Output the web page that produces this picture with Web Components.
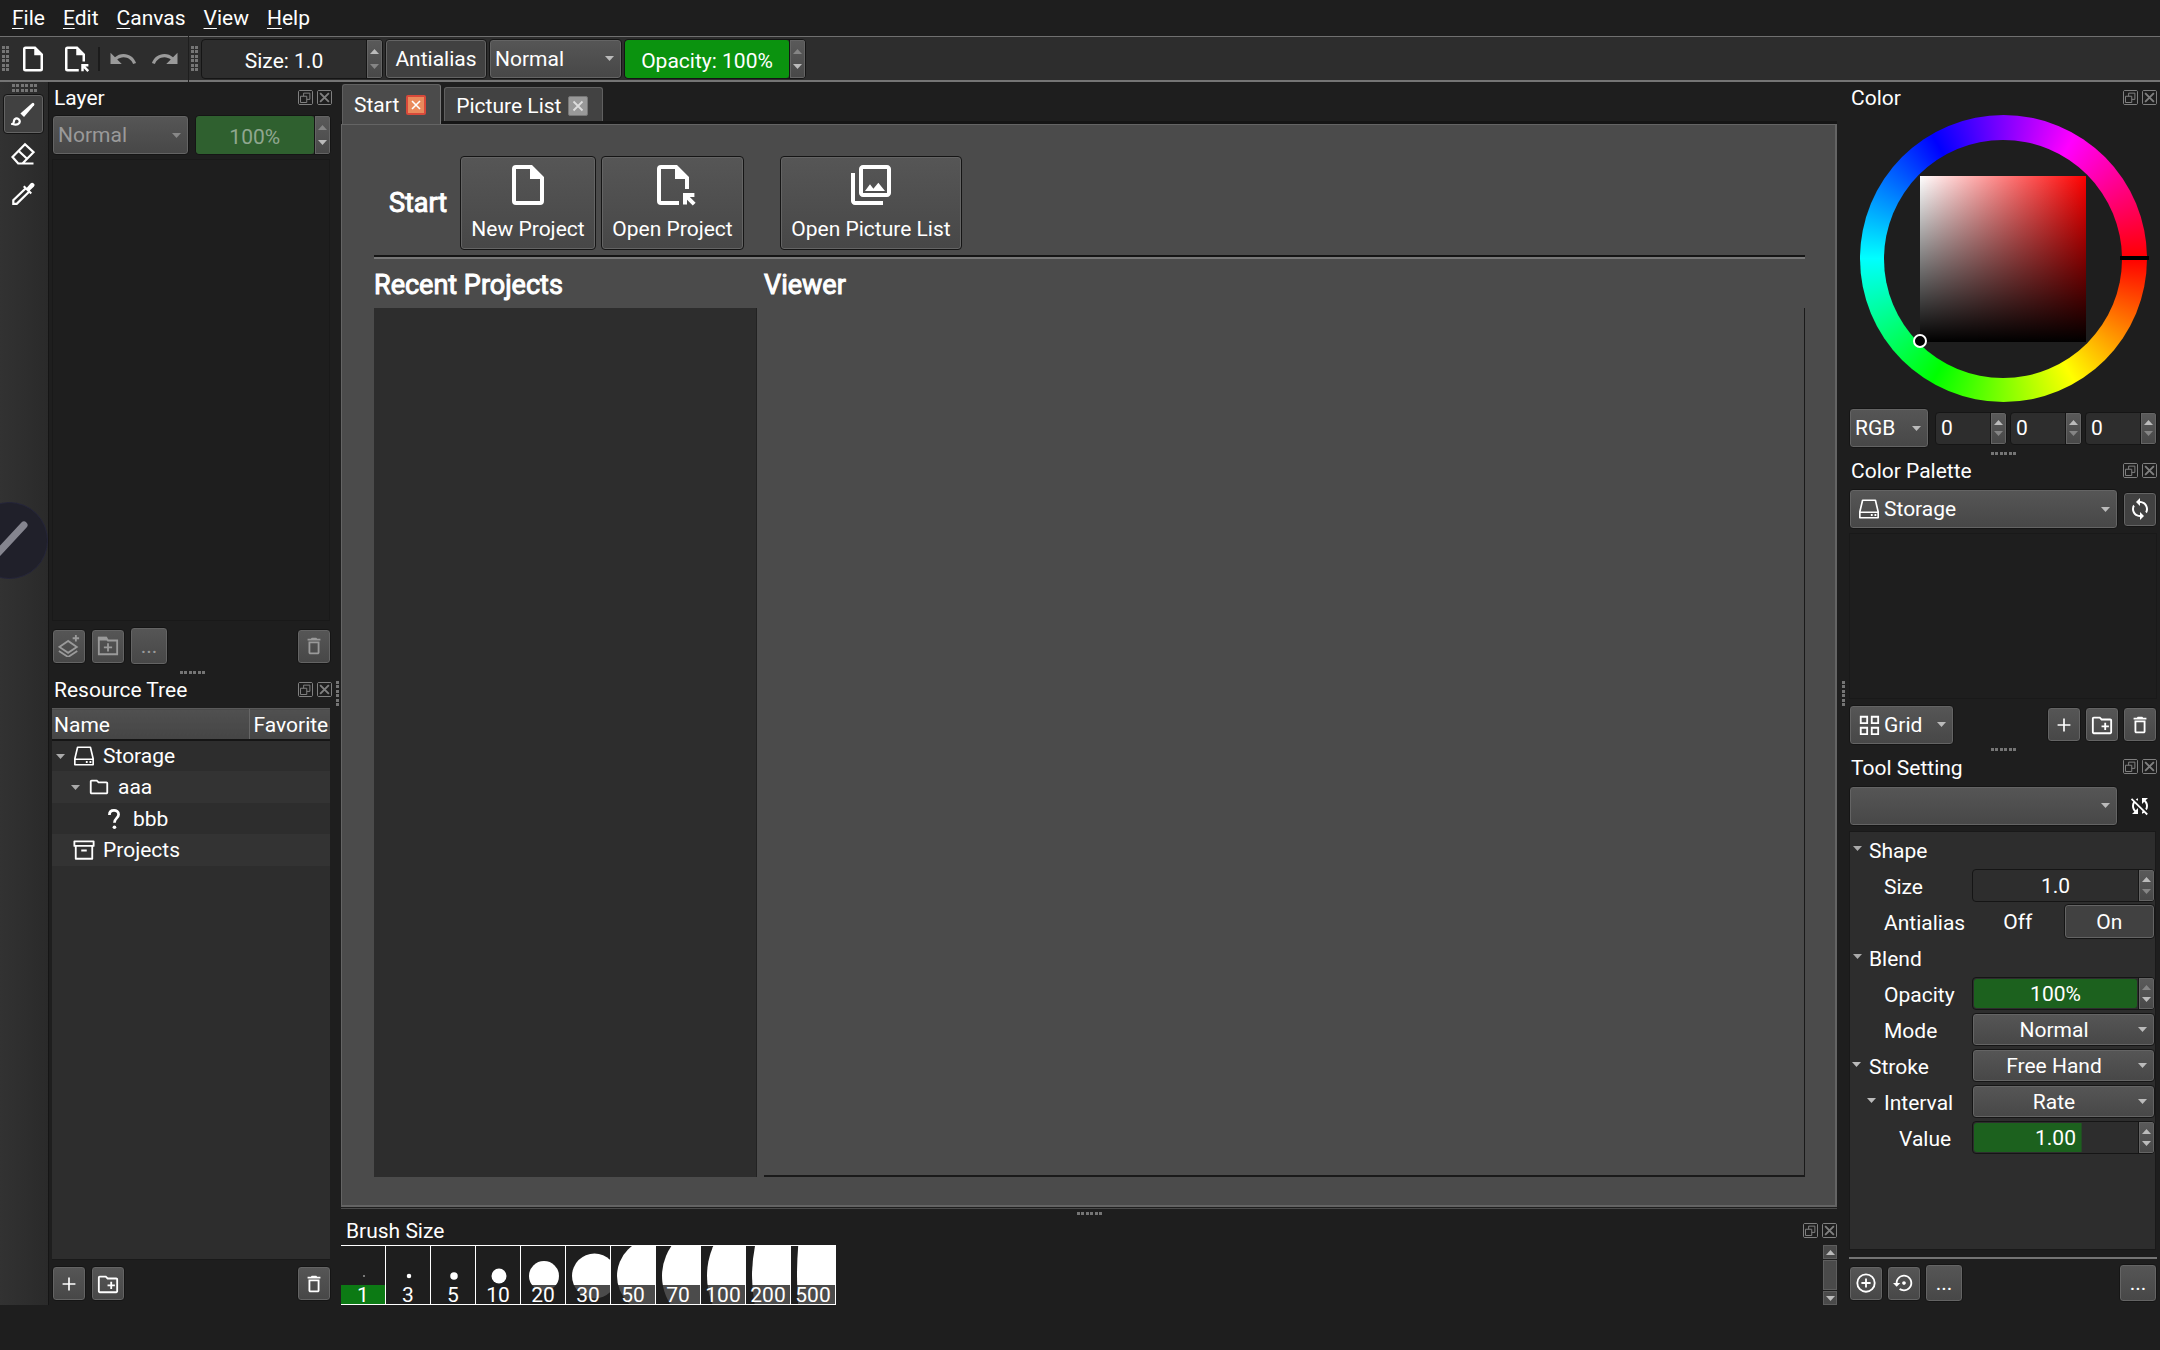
<!DOCTYPE html>
<html lang="en">
<head>
<meta charset="utf-8">
<title>Paint</title>
<style>
  :root {
    --bg: #1e1e1e;
    --panel: #2d2d2d;
    --pane: #4b4b4b;
    --edge: #151515;
    --rim: #646464;
    --green: #1c611e;
  }
  body {
    margin: 0;
    background: var(--bg);
    color: #fff;
    font: 21px/26px Roboto, "Liberation Sans", sans-serif;
  }
</style>
</head>
<body>
<paint-app></paint-app>

<script>
const ICONS = {
  file: `<path fill-rule="evenodd" d="M14 2H6a2 2 0 0 0-2 2v16a2 2 0 0 0 2 2h12a2 2 0 0 0 2-2V8zM6 4h7v5h5v11H6z"/>`,
  open: `<path d="M14 2H6a2 2 0 0 0-2 2v16a2 2 0 0 0 2 2h9v-2H6V4h7v5h5v5h2V8z"/><path d="M17 16h5.7v2h-2.3l2.9 2.9-1.4 1.4-2.9-2.9v2.3h-2z"/>`,
  pictures: `<path d="M20 4v12H8V4h12m0-2H8c-1.1 0-2 .9-2 2v12c0 1.1.9 2 2 2h12c1.1 0 2-.9 2-2V4c0-1.1-.9-2-2-2zm-8.5 9.67l1.69 2.26 2.48-3.1L19 15H9zM2 6v14c0 1.1.9 2 2 2h14v-2H4V6H2z"/>`,
  undo: `<path d="M12.5 8c-2.65 0-5.05.99-6.9 2.6L2 7v9h9l-3.62-3.62c1.39-1.16 3.16-1.88 5.12-1.88 3.54 0 6.55 2.31 7.6 5.5l2.37-.78C21.08 11.03 17.15 8 12.5 8z"/>`,
  redo: `<path d="M18.4 10.6C16.55 8.99 14.15 8 11.5 8c-4.65 0-8.58 3.03-9.96 7.22L3.9 16c1.05-3.19 4.05-5.5 7.6-5.5 1.95 0 3.73.72 5.12 1.88L13 16h9V7l-3.6 3.6z"/>`,
  brush: `<path d="M21 1.2a1.5 1.5 0 0 1 2.1 2.1L13 15l-3.6-3.6z"/><path d="M1.5 22c1.8-.6 1-3.3 2.2-4.7a3 3 0 0 1 4.6 3.7c-1.4 1.8-4.3 1.9-6.8 1z" fill="none" stroke="currentColor" stroke-width="2.2"/>`,
  eraser: `<path d="M1.500 15 14 2.200l8.500 8L11.500 21.500H7.200zM7.500 8.800l8.500 8M9 21.500h13.500" fill="none" stroke="currentColor" stroke-width="2.2"/>`,
  dropper: `<path d="M14.5 6.5 2.3 18.3v3.6h3.4L17.8 10" fill="none" stroke="currentColor" stroke-width="2.2"/><path d="M12 5l1.5-1.5 2.3 2.3L19.5 1.5a2 2 0 0 1 3.3 3.2l-4 3.8 2.2 2.2-1.5 1.5z"/>`,
  folder: `<path d="M9.17 6l2 2H20v10H4V6h5.17M10 4H4c-1.1 0-2 .9-2 2v12c0 1.1.9 2 2 2h16c1.1 0 2-.9 2-2V8c0-1.1-.9-2-2-2h-8l-2-2z"/>`,
  folderPlus: `<path d="M9.17 5l2 2H21v13H3V5h6.17M10 3H3c-1.1 0-2 .9-2 2v15c0 1.1.9 2 2 2h18c1.1 0 2-.9 2-2V7c0-1.1-.9-2-2-2h-9l-2-2z"/><path d="M14.5 17.5h2v-3h3v-2h-3v-3h-2v3h-3v2h3z"/>`,
  groupPlus: `<path d="M2 3h8l2 3h10v15H2z" fill="none" stroke="currentColor" stroke-width="2"/><path d="M1 2h10v4H1z"/><path d="M11 18h2v-3.5h3.5v-2H13V9h-2v3.5H7.5v2H11z"/>`,
  layerPlus: `<path d="M11 6.5 1.5 13 11 19.5 20.5 13zM1 17.5 11 24l10-6.5M19.5 0v7M16 3.5h7" fill="none" stroke="currentColor" stroke-width="2"/>`,
  trash: `<path d="M16 9v10H8V9h8m-1.5-6h-5l-1 1H5v2h14V4h-3.5l-1-1zM18 7H6v12c0 1.1.9 2 2 2h8c1.1 0 2-.9 2-2V7z"/>`,
  plus: `<path d="M12 5v14M5 12h14" stroke="currentColor" stroke-width="1.8"/>`,
  plusCircle: `<circle cx="12" cy="12" r="9.5" fill="none" stroke="currentColor" stroke-width="2"/><path d="M12 7v10M7 12h10" stroke="currentColor" stroke-width="2"/>`,
  reload: `<path d="M12 4V1L8 5l4 4V6c3.31 0 6 2.69 6 6 0 1.01-.25 1.97-.7 2.8l1.46 1.46C19.54 15.03 20 13.57 20 12c0-4.42-3.58-8-8-8zm0 14c-3.31 0-6-2.69-6-6 0-1.01.25-1.97.7-2.8L5.24 7.74C4.46 8.97 4 10.43 4 12c0 4.42 3.58 8 8 8v3l4-4-4-4v3z"/>`,
  noSync: `<path d="M10 6.35V4.26c-.8.21-1.55.54-2.23.96l1.46 1.46c.25-.12.5-.24.77-.33zm-7.14-.94l2.36 2.36C4.45 8.99 4 10.44 4 12c0 2.21.91 4.2 2.36 5.64L4 20h6v-6l-2.24 2.24C6.68 15.15 6 13.66 6 12c0-1 .25-1.94.68-2.77l8.08 8.08c-.25.13-.5.25-.77.34v2.09c.8-.21 1.55-.54 2.23-.96l2.36 2.36 1.27-1.27L4.14 4.14 2.86 5.41zM20 4h-6v6l2.24-2.24C17.32 8.85 18 10.34 18 12c0 1-.25 1.94-.68 2.77l1.46 1.46C19.55 15.01 20 13.56 20 12c0-2.21-.91-4.2-2.36-5.64L20 4z"/>`,
  restore: `<path d="M14 12c0-1.1-.9-2-2-2s-2 .9-2 2 .9 2 2 2 2-.9 2-2zm-2-9c-4.97 0-9 4.03-9 9H0l4 4 4-4H5c0-3.87 3.13-7 7-7s7 3.13 7 7-3.13 7-7 7c-1.51 0-2.91-.49-4.06-1.3l-1.42 1.44C8.04 20.3 9.94 21 12 21c4.97 0 9-4.03 9-9s-4.03-9-9-9z"/>`,
  drive: `<path d="M5 2.5h14L22 15v6.5H2V15zM2 15.5h20" fill="none" stroke="currentColor" stroke-width="1.8" stroke-linejoin="round"/><path d="M14 17.5h2v2h-2zM18 17.5h2v2h-2z"/>`,
  archive: `<path d="M1.5 2.5h21v5h-21zM3 7.5h18v14H3zM9 12.5h6" fill="none" stroke="currentColor" stroke-width="2" stroke-linejoin="round"/>`,
  question: `<path d="M7 7.5C7 3.5 9.5 2.5 12 2.5s5 1.5 5 4.5c0 4-4.5 4.2-4.5 9" fill="none" stroke="currentColor" stroke-width="3"/><circle cx="12.5" cy="21" r="2"/>`,
  grid: `<path d="M3 3h7v7H3zM15 3h7v7h-7zM3 15h7v7H3zM15 15h7v7h-7z" fill="none" stroke="currentColor" stroke-width="2"/>`,
  float: `<path d="M2 .8h20L23.2 2v20L22 23.2H2L.8 22V2zM4 10h10v10H4zM9 10V5h10v10h-5" fill="none" stroke="currentColor" stroke-width="1.6"/>`,
  close: `<path d="M2 .8h20L23.2 2v20L22 23.2H2L.8 22V2z" fill="none" stroke="currentColor" stroke-width="1.6"/><path d="M5 5l14 14M19 5 5 19" stroke="currentColor" stroke-width="3"/>`,
  cross: `<path d="M6 6l12 12M18 6 6 18" stroke="currentColor" stroke-width="2.4"/>`
};

const icon = (name, size = 22) =>
  `<svg class="icon" width="${size}" height="${size}" viewBox="0 0 24 24" fill="currentColor" aria-hidden="true">${ICONS[name]}</svg>`;

const arrow = (dir = "down") =>
  `<svg class="arrow" width="9" height="5" viewBox="0 0 9 5" fill="currentColor" aria-hidden="true"><path d="${dir === "up" ? "M0 5 4.5 0 9 5z" : "M0 0h9L4.5 5z"}"/></svg>`;

const COMMON = `
  :host, * { box-sizing: border-box; }
  button, input, select { font: inherit; color: inherit; margin: 0; padding: 0; border: 0; background: none; outline: none; border-radius: 0; }
  svg { display: block; flex: none; }
  .raised {
    background: linear-gradient(#565656, #474747);
    border: 1px solid var(--edge);
    border-radius: 4px;
    box-shadow: inset 0 0 0 1px var(--rim);
  }
`;

class BaseElement extends HTMLElement {
  connectedCallback() {
    if (this.shadowRoot) return;
    this.attachShadow({ mode: "open" });
    this.shadowRoot.innerHTML = `<style>${COMMON}</style>` + this.render();
  }

  attr(name, fallback = "") {
    return this.getAttribute(name) || fallback;
  }

  // visible caption for settings rows, hidden name otherwise
  caption() {
    if (!this.hasAttribute("caption")) return "";
    return `<label for="field" style="padding-left: ${this.attr("level", 0) * 15}px">
      <span class="twist">${this.hasAttribute("open") ? arrow() : ""}</span>${this.attr("caption")}</label>`;
  }
}

const ROW = `
  :host { display: grid; }
  :host([caption]) { grid-template-columns: 122px 1fr; align-items: center; height: 36px; }
  label { display: flex; align-items: center; padding-top: 2px; }
  .twist { width: 19px; padding: 0 0 4px 3px; color: #aaa; }
`;

class DotGrip extends BaseElement {
  render() {
    const steps = [0, 4, 9, 13, 18, 22];
    const lines = Number(this.attr("lines", 1));
    const vertical = this.hasAttribute("vertical");
    let dots = "";
    for (let l = 0; l < lines; l++) {
      dots += steps.map(s => vertical
        ? `<rect x="${l * 4}" y="${s}" width="3" height="3"/>`
        : `<rect x="${s}" y="${l * 5}" width="3" height="3"/>`).join("");
    }
    const w = vertical ? lines * 4 - 1 : 25;
    const h = vertical ? 25 : lines * 5 - 2;
    return `
      <style>:host { display: grid; place-items: center; color: #757575; }</style>
      <svg width="${w}" height="${h}" fill="currentColor">${dots}</svg>`;
  }
}

class MenuBar extends BaseElement {
  render() {
    const items = ["File", "Edit", "Canvas", "View", "Help"];
    return `
      <style>
        :host { display: block; }
        nav { display: flex; gap: 18px; padding: 5px 12px; height: 36px; }
        u { text-decoration-thickness: 1px; text-underline-offset: 3px; text-decoration-skip-ink: none; }
      </style>
      <nav>${items.map(t => `<button><u>${t[0]}</u>${t.slice(1)}</button>`).join("")}</nav>`;
  }
}

class ToolBar extends BaseElement {
  render() {
    return `
      <style>
        :host {
          display: flex;
          align-items: center;
          height: 46px;
          background: var(--panel);
          border-top: 1px solid #707070;
          border-bottom: 2px solid #757575;
        }
      </style>
      <slot></slot>`;
  }
}

class ToolButton extends BaseElement {
  render() {
    return `
      <style>
        :host { display: block; }
        button { display: flex; align-items: center; justify-content: center; width: 100%; height: 100%; white-space: nowrap; }
        :host([disabled]) button { color: #9a9a9a; }
        :host([pressed]) button { background: #414141; }
        :host([big]) button { flex-direction: column; gap: 7px; padding-bottom: 3px; }
      </style>
      <button class="${this.hasAttribute("flat") ? "" : "raised"}" aria-label="${this.attr("name", this.textContent)}">
        ${this.hasAttribute("icon") ? icon(this.attr("icon"), this.attr("size", 22)) : ""}<slot></slot>
      </button>`;
  }
}

class ComboBox extends BaseElement {
  render() {
    return `
      <style>
        ${ROW}
        .box { display: grid; align-items: center; height: 40px; color: #fff; }
        :host([caption]) .box { height: 33px; }
        .box > * { grid-area: 1 / 1; }
        select { appearance: none; width: 100%; height: 100%; padding: 0 24px 0 5px; }
        :host([icon]) select { padding-left: 34px; }
        :host([caption]) select { text-align: center; text-align-last: center; }
        :host([disabled]) select { color: #9a9a9a; opacity: 1; }
        .icon, .arrow { pointer-events: none; }
        .icon { margin-left: 9px; }
        .arrow { justify-self: end; margin-right: 8px; color: #bbb; }
        :host([disabled]) .arrow { color: #888; }
      </style>
      ${this.caption()}
      <div class="box">
        <select id="field" class="raised" aria-label="${this.attr("name", this.attr("caption"))}">
          <option>${this.attr("value")}</option>
        </select>
        ${this.hasAttribute("icon") ? icon(this.attr("icon")) : ""}
        ${arrow()}
      </div>`;
  }
}

class SpinBox extends BaseElement {
  render() {
    return `
      <style>
        ${ROW}
        .box {
          display: grid;
          grid-template-columns: 1fr 16px;
          height: 40px;
          background: var(--panel);
          border: 1px solid var(--edge);
          border-radius: 4px;
          overflow: hidden;
        }
        :host([caption]) .box, :host([plain]) .box { height: 33px; }
        input {
          width: 100%;
          min-width: 0;
          text-align: center;
          padding-top: 4px;
          border-radius: 3px;
          background: linear-gradient(var(--bar, transparent) 0 0) no-repeat 0 0 / var(--fill, 100%) 100%;
        }
        :host([caption]) input, :host([plain]) input { padding-top: 0; }
        :host([caption]) input { margin: 1px; width: auto; }
        :host([plain]) input { text-align: left; padding-left: 5px; }
        :host([disabled]) input { color: #8fa78f; }
        .steps {
          display: grid;
          background: linear-gradient(#5a5a5a, #484848);
          border-left: 1px solid var(--edge);
          box-shadow: inset 0 0 0 1px var(--rim);
          color: #bbb;
          padding: 4px 0;
        }
        .steps button { display: grid; place-items: center; }
        :host([min]) .steps button:last-child, :host([max]) .steps button:first-child { color: #858585; }
      </style>
      ${this.caption()}
      <div class="box">
        <input id="field" type="text" value="${this.attr("value")}" aria-label="${this.attr("name", this.attr("caption"))}">
        <div class="steps">
          <button aria-label="Increase">${arrow("up")}</button>
          <button aria-label="Decrease">${arrow()}</button>
        </div>
      </div>`;
  }
}

class DockPanel extends BaseElement {
  render() {
    return `
      <style>
        :host { display: flex; flex-direction: column; min-height: 0; }
        header { display: flex; align-items: center; gap: 4px; height: 28px; flex: none; padding-left: var(--inset, 2px); }
        h2 { flex: 1; margin: 0; font: inherit; }
        header button { color: #808080; margin-bottom: 2px; }
        .body { flex: 1; display: flex; flex-direction: column; min-height: 0; padding-top: var(--lead, 3px); }
      </style>
      <header>
        <h2>${this.attr("caption")}</h2>
        <button aria-label="Float">${icon("float", 15)}</button>
        <button aria-label="Close">${icon("close", 15)}</button>
      </header>
      <div class="body"><slot></slot></div>`;
  }
}

class ResourceTree extends BaseElement {
  render() {
    const rows = [
      { level: 0, open: true, icon: "drive", text: "Storage" },
      { level: 1, open: true, icon: "folder", text: "aaa" },
      { level: 2, icon: "question", text: "bbb" },
      { level: 0, icon: "archive", text: "Projects" }
    ];
    return `
      <style>
        :host { display: block; background: var(--panel); border-bottom: 1px solid #191919; }
        table { width: 100%; border-collapse: collapse; table-layout: fixed; }
        th { font-weight: 400; text-align: left; height: 31px; padding: 3px 2px 1px; background: linear-gradient(#505050, #454545); border-top: 1px solid #5a5a5a; border-bottom: 2px solid var(--edge); }
        th + th { border-left: 1px solid #666; padding-left: 4px; width: 81px; }
        td { height: 31px; padding: 0; }
        tr:nth-child(even) td { height: 32px; background: #333; }
        .node { display: flex; align-items: center; }
        .twist { width: 21px; padding-left: 4px; color: #aaa; }
        .icon { margin-right: 8px; }
      </style>
      <table>
        <thead><tr><th>Name</th><th>Favorite</th></tr></thead>
        <tbody>
          ${rows.map(r => `<tr><td><div class="node" style="padding-left: ${r.level * 15}px">
            <span class="twist">${r.open ? arrow() : ""}</span>${icon(r.icon)}${r.text}</div></td><td></td></tr>`).join("")}
        </tbody>
      </table>`;
  }
}

class ColorWheel extends BaseElement {
  render() {
    return `
      <style>
        :host { display: block; position: relative; width: 287px; height: 287px; margin: 0 auto; }
        .ring {
          height: 100%;
          border-radius: 50%;
          background: conic-gradient(from 90deg, #f00, #ff0, #0f0, #0ff, #00f, #f0f, #f00);
          display: grid;
          place-items: center;
        }
        .hole { width: 238px; height: 238px; border-radius: 50%; background: var(--bg); display: grid; place-items: center; }
        .shade { width: 166px; height: 166px; background: linear-gradient(transparent, #000), linear-gradient(90deg, #fff, #f00); }
        .hue { position: absolute; right: -2px; top: 141px; width: 29px; height: 4px; background: #000; }
        .pick { position: absolute; left: 53px; top: 219px; width: 14px; height: 14px; border: 2px solid #fff; border-radius: 50%; background: #000; }
      </style>
      <div class="ring"><div class="hole"><div class="shade"></div></div></div>
      <span class="hue"></span>
      <span class="pick"></span>`;
  }
}

class BrushSizes extends BaseElement {
  render() {
    const sizes = [1, 3, 5, 10, 20, 30, 50, 70, 100, 200, 500];
    // preview is 1.5x the size, pinned to the left edge once it gets too wide
    const preview = n => {
      const r = n * 0.75;
      const cx = n < 30 ? 23 : 6 + r;
      return `<circle cx="${cx}" cy="30" r="${r}"/>`;
    };
    return `
      <style>
        :host { display: flex; justify-content: space-between; height: 60px; }
        .sizes { display: flex; border: solid #fff; border-width: 1px 0; }
        .sizes button { display: grid; width: 45px; height: 58px; border-right: 1px solid #fff; }
        .sizes button > * { grid-area: 1 / 1; }
        .sizes span { align-self: end; height: 19px; line-height: 21px; background: rgba(30, 30, 30, .8); }
        .sizes .on span { background: #0c7a14; }
        .bar { display: grid; grid-template-rows: 14px 1fr 14px; gap: 1px; width: 14px; color: #bbb; }
        .bar > * { background: #4a4a4a; border: 1px solid #5e5e5e; display: grid; place-items: center; }
      </style>
      <div class="sizes">
        ${sizes.map(n => `<button class="${n === 1 ? "on" : ""}">
          <svg width="44" height="58" fill="#fff" aria-hidden="true">${preview(n)}</svg><span>${n}</span></button>`).join("")}
      </div>
      <div class="bar">
        <button aria-label="Scroll up">${arrow("up")}</button>
        <span></span>
        <button aria-label="Scroll down">${arrow()}</button>
      </div>`;
  }
}

class TabBar extends BaseElement {
  render() {
    return `
      <style>
        :host { display: flex; gap: 3px; height: 42px; padding: 2px 1px 0; background: linear-gradient(var(--bg) 39px, var(--edge) 39px); }
        .tab { display: flex; align-items: center; gap: 7px; height: 34px; margin-top: 3px; padding: 2px 14px 0 11px; background: #424242; border: 1px solid #606060; border-bottom: 0; border-radius: 3px 3px 0 0; }
        .tab.on { height: 40px; margin-top: 0; padding-top: 0; background: var(--pane); border-right-color: #777; }
        button { width: 20px; height: 20px; display: grid; place-items: center; background: #999; color: #ddd; border: 1px solid #777; border-radius: 2px; }
        .on button { background: #ea8a5c; color: #fff; border: 2px solid #d8493a; }
      </style>
      <div class="tab on">Start<button aria-label="Close Start">${icon("cross", 16)}</button></div>
      <div class="tab">Picture List<button aria-label="Close Picture List">${icon("cross", 18)}</button></div>`;
  }
}

class StartPage extends BaseElement {
  render() {
    return `
      <style>
        :host {
          display: flex;
          flex-direction: column;
          background: var(--pane);
          border: solid #646464;
          border-width: 1px 2px 2px 1px;
          padding: 31px 30px 28px 32px;
        }
        h1, h2 { margin: 0; font-size: 27px; line-height: 32px; font-weight: 400; -webkit-text-stroke: 1px currentColor; }
        .row { display: flex; align-items: center; height: 94px; padding-left: 15px; gap: 5px; }
        .row h1 { width: 66px; }
        .row tool-button { height: 94px; }
        .gap { width: 26px; }
        hr { width: 100%; margin: 5px 0 0; border: solid; border-width: 2px 0; border-color: var(--edge) #777 #777; }
        .lists { flex: 1; display: grid; grid-template: auto 1fr / 383px 1fr; gap: 7px; padding-top: 10px; }
        .recent { background: var(--panel); border-right: 1px solid #222; }
        .viewer { border: solid #1a1a1a; border-width: 0 1px 2px 0; }
      </style>
      <div class="row">
        <h1>Start</h1>
        <tool-button big icon="file" size="48" style="width: 136px">New Project</tool-button>
        <tool-button big icon="open" size="48" style="width: 143px">Open Project</tool-button>
        <span class="gap"></span>
        <tool-button big icon="pictures" size="48" style="width: 182px">Open Picture List</tool-button>
      </div>
      <hr>
      <div class="lists">
        <h2>Recent Projects</h2>
        <h2>Viewer</h2>
        <div class="recent"></div>
        <div class="viewer"></div>
      </div>`;
  }
}

class SettingHead extends BaseElement {
  render() {
    return `<style>${ROW}</style>${this.caption()}<slot></slot>`;
  }
}

class PaintApp extends BaseElement {
  render() {
    return `
      <style>
        :host { display: flex; flex-direction: column; height: 100vh; padding-bottom: 45px; overflow: hidden; }
        .bars { display: grid; grid-template-columns: 188px 1fr; gap: 1px; flex: none; }
        .file { padding-left: 2px; }
        .file tool-button { width: 30px; height: 30px; }
        .sep { width: 2px; height: 24px; margin: 0 8px; background: #1b1b1b; }
        .brush { padding-left: 2px; gap: 2px; }
        .brush dot-grip { margin-right: 1px; }
        main { flex: 1; min-height: 0; display: grid; grid-template-columns: 49px 284px 8px 1fr 12px 311px; }
        .tools { display: flex; flex-direction: column; align-items: center; padding: 2px 5px 0 3px; background: linear-gradient(90deg, #323232, #2a2a2a); border-right: 1px solid #151515; }
        .tools tool-button { width: 41px; height: 40px; }
        .tools dot-grip { margin: 0 0 2px 3px; }
        .column { display: flex; flex-direction: column; min-height: 0; padding-top: 2px; }
        .left { padding-left: 3px; padding-right: 1px; }
        .right { padding-right: 3px; }
        .row { display: flex; align-items: center; flex: none; }
        .left .row { padding-right: 1px; }
        .left resource-tree, .left .list { margin-right: 2px; }
        .row tool-button { width: 34px; height: 35px; margin-right: 5px; }
        .right .row tool-button { margin-right: 4px; }
        .row tool-button.wide { width: 38px; height: 38px; }
        .column .row tool-button:last-child { margin-right: 0; }
        .fill { flex: 1; min-height: 0; }
        .list { border: 1px solid #191919; margin: 4px 0 6px; }
        .split { height: 8px; flex: none; }
        .center { display: flex; flex-direction: column; min-height: 0; }
        start-page { flex: 1; }
        .center-line { height: 2px; border-bottom: 1px solid #4a4a4a; }
        .settings { background: var(--panel); border: 1px solid #191919; margin: 5px 1px 0 0; }
        .choice { display: grid; grid-template-columns: 1fr 1fr; height: 36px; align-items: center; }
        .choice tool-button { height: 35px; }
        .rule { height: 2px; margin: 7px 0 5px; background: #757575; flex: none; }
        .puck { position: fixed; left: -29px; top: 502px; }
      </style>

      <menu-bar></menu-bar>
      <div class="bars">
        <tool-bar class="file">
          <dot-grip vertical lines="2"></dot-grip>
          <tool-button flat icon="file" size="30" name="New" style="margin: 0 12px 0 9px"></tool-button>
          <tool-button flat icon="open" size="30" name="Open"></tool-button>
          <span class="sep"></span>
          <tool-button flat disabled icon="undo" size="30" name="Undo" style="margin-right: 12px"></tool-button>
          <tool-button flat disabled icon="redo" size="30" name="Redo"></tool-button>
        </tool-bar>
        <tool-bar class="brush">
          <dot-grip vertical lines="2"></dot-grip>
          <spin-box min value="Size: 1.0" name="Size" style="width: 182px"></spin-box>
          <tool-button pressed style="width: 102px; height: 40px">Antialias</tool-button>
          <combo-box value="Normal" name="Blend mode" style="width: 133px"></combo-box>
          <spin-box max value="Opacity: 100%" name="Opacity" style="width: 182px; --bar: #0b930f"></spin-box>
        </tool-bar>
      </div>

      <main>
        <div class="tools">
          <dot-grip lines="2"></dot-grip>
          <tool-button pressed icon="brush" size="24" name="Brush"></tool-button>
          <tool-button flat icon="eraser" size="24" name="Eraser"></tool-button>
          <tool-button flat icon="dropper" size="24" name="Color picker"></tool-button>
        </div>

        <div class="column left">
          <dock-panel caption="Layer" style="flex: 584 1 0">
            <div class="row" style="gap: 6px">
              <combo-box disabled value="Normal" name="Layer mode" style="flex: 1"></combo-box>
              <spin-box disabled max value="100%" name="Layer opacity" style="flex: 1; --bar: #2f602f"></spin-box>
            </div>
            <div class="fill list"></div>
            <div class="row" style="padding-bottom: 3px">
              <tool-button disabled icon="layerPlus" name="Add layer"></tool-button>
              <tool-button disabled icon="groupPlus" name="Add group"></tool-button>
              <tool-button disabled class="wide">...</tool-button>
              <span class="fill"></span>
              <tool-button disabled icon="trash" name="Delete layer"></tool-button>
            </div>
          </dock-panel>
          <dot-grip class="split"></dot-grip>
          <dock-panel caption="Resource Tree" style="flex: 629 1 0; --lead: 4px">
            <resource-tree class="fill"></resource-tree>
            <div class="row" style="padding: 6px 1px 4px 0">
              <tool-button icon="plus" name="Add"></tool-button>
              <tool-button icon="folderPlus" name="Add folder"></tool-button>
              <span class="fill"></span>
              <tool-button icon="trash" name="Delete"></tool-button>
            </div>
          </dock-panel>
        </div>

        <dot-grip vertical></dot-grip>

        <div class="center">
          <tab-bar></tab-bar>
          <start-page></start-page>
          <div class="center-line"></div>
          <dot-grip class="split"></dot-grip>
          <dock-panel caption="Brush Size" style="--lead: 0px; --inset: 5px">
            <brush-sizes></brush-sizes>
          </dock-panel>
        </div>

        <dot-grip vertical></dot-grip>

        <div class="column right">
          <dock-panel caption="Color">
            <color-wheel></color-wheel>
            <div class="row" style="gap: 3px; padding: 6px 0 1px">
              <combo-box value="RGB" name="Color model" style="width: 80px; margin-right: 3px"></combo-box>
              <spin-box plain min value="0" name="Red" style="flex: 1"></spin-box>
              <spin-box plain min value="0" name="Green" style="flex: 1"></spin-box>
              <spin-box plain min value="0" name="Blue" style="flex: 1"></spin-box>
            </div>
          </dock-panel>
          <dot-grip class="split"></dot-grip>
          <dock-panel caption="Color Palette" style="flex: 289 1 0; --lead: 4px">
            <div class="row" style="gap: 5px">
              <combo-box class="fill" icon="drive" value="Storage" name="Palette location"></combo-box>
              <tool-button pressed icon="reload" size="24" name="Reload"></tool-button>
            </div>
            <div class="fill list"></div>
            <div class="row" style="padding-bottom: 1px">
              <combo-box icon="grid" value="Grid" name="View mode" style="width: 105px"></combo-box>
              <span class="fill"></span>
              <tool-button icon="plus" name="Add color"></tool-button>
              <tool-button icon="folderPlus" name="Add palette"></tool-button>
              <tool-button icon="trash" name="Delete color"></tool-button>
            </div>
          </dock-panel>
          <dot-grip class="split"></dot-grip>
          <dock-panel caption="Tool Setting" style="flex: 552 1 0; --lead: 4px">
            <div class="row" style="gap: 5px">
              <combo-box class="fill" value="" name="Preset"></combo-box>
              <tool-button flat icon="noSync" size="24" name="Sync off"></tool-button>
            </div>
            <div class="fill settings">
              <setting-head caption="Shape" open></setting-head>
              <spin-box caption="Size" level="1" min value="1.0"></spin-box>
              <setting-head caption="Antialias" level="1">
                <div class="choice">
                  <tool-button flat>Off</tool-button>
                  <tool-button pressed>On</tool-button>
                </div>
              </setting-head>
              <setting-head caption="Blend" open></setting-head>
              <spin-box caption="Opacity" level="1" max value="100%" style="--bar: var(--green)"></spin-box>
              <combo-box caption="Mode" level="1" value="Normal"></combo-box>
              <combo-box caption="Stroke" open value="Free Hand"></combo-box>
              <combo-box caption="Interval" level="1" open value="Rate"></combo-box>
              <spin-box caption="Value" level="2" value="1.00" style="--bar: var(--green); --fill: 66%"></spin-box>
            </div>
            <div class="rule"></div>
            <div class="row" style="padding-bottom: 3px">
              <tool-button icon="plusCircle" name="Add preset"></tool-button>
              <tool-button icon="restore" name="Restore"></tool-button>
              <tool-button class="wide">...</tool-button>
              <span class="fill"></span>
              <tool-button class="wide">...</tool-button>
            </div>
          </dock-panel>
        </div>
      </main>

      <svg class="puck" width="77" height="77" viewBox="0 0 77 77" aria-hidden="true">
        <circle cx="38.5" cy="38.5" r="38" fill="#20202a" stroke="#25253a"/>
        <path d="M27 51 53 23" stroke="#85858f" stroke-width="7" stroke-linecap="round"/>
      </svg>`;
  }
}

customElements.define("dot-grip", DotGrip);
customElements.define("menu-bar", MenuBar);
customElements.define("tool-bar", ToolBar);
customElements.define("tool-button", ToolButton);
customElements.define("combo-box", ComboBox);
customElements.define("spin-box", SpinBox);
customElements.define("dock-panel", DockPanel);
customElements.define("resource-tree", ResourceTree);
customElements.define("color-wheel", ColorWheel);
customElements.define("brush-sizes", BrushSizes);
customElements.define("tab-bar", TabBar);
customElements.define("start-page", StartPage);
customElements.define("setting-head", SettingHead);
customElements.define("paint-app", PaintApp);
</script>
</body>
</html>
